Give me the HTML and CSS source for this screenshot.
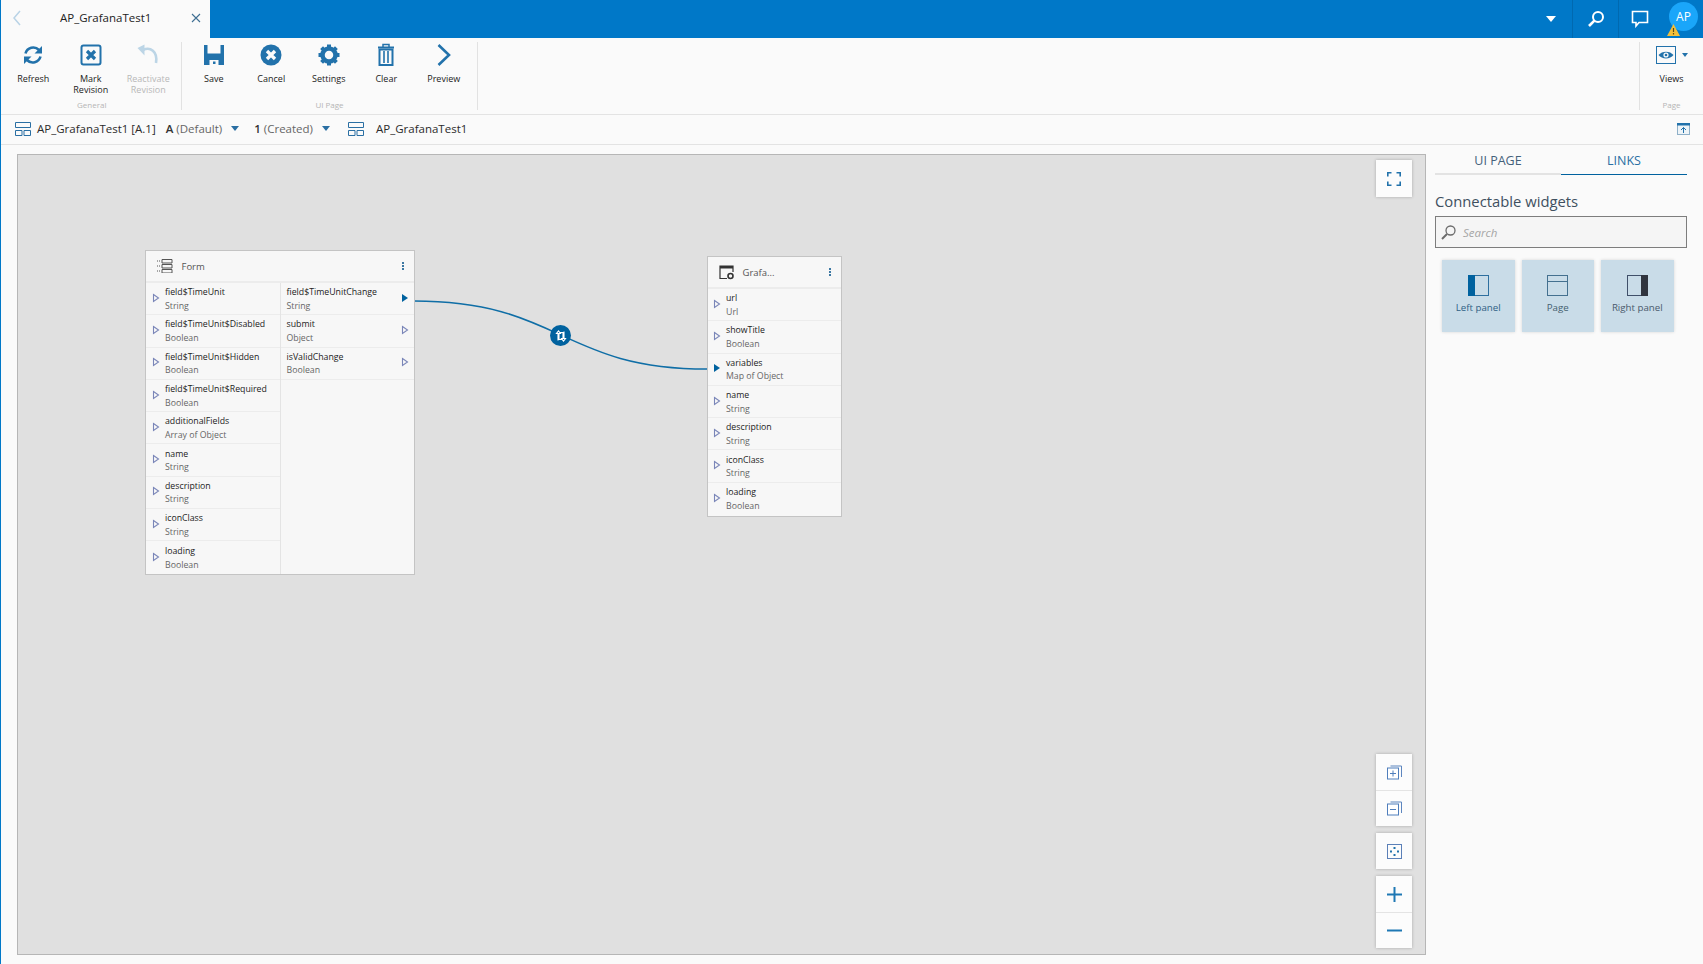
FILE: index.html
```html
<!DOCTYPE html>
<html lang="en">
<head>
<meta charset="utf-8">
<title>AP_GrafanaTest1</title>
<link rel="stylesheet" href="styles.css">
</head>
<body>
<svg class="defs" width="0" height="0" aria-hidden="true">
  <symbol id="port" viewBox="0 0 8 10"><path d="M1.5 1.5 L6.5 5 L1.5 8.5Z" fill="none" stroke="#7a86b8" stroke-width="1.1"/></symbol>
  <symbol id="port-on" viewBox="0 0 8 10"><path d="M1 1 L7 5 L1 9Z" fill="#00629f"/></symbol>
  <symbol id="layout" viewBox="0 0 16 14"><path d="M.5.5h15v5H.5zM.5 8.5h6.5v5H.5zM9 8.5h6.5v5H9z" fill="none" stroke="#2a6fa3" stroke-width="1"/></symbol>
</svg>

<header class="topbar">
  <div class="tab">
    <svg class="tab-back" width="10" height="16" viewBox="0 0 10 16"><path d="M8 1 L2 8 L8 15" fill="none" stroke="#b9d3e6" stroke-width="1.5"/></svg>
    <span class="tab-title">AP_GrafanaTest1</span>
    <svg class="tab-close" width="10" height="10" viewBox="0 0 10 10"><path d="M1 1L9 9M9 1L1 9" stroke="#3f6f93" stroke-width="1.1"/></svg>
  </div>
  <div class="top-actions">
    <div class="top-caret"></div>
    <div class="top-btn top-btn-search">
      <svg width="18" height="18" viewBox="0 0 18 18"><circle cx="11" cy="7" r="5" fill="none" stroke="#fff" stroke-width="2"/><path d="M7.4 10.6L2 16" stroke="#fff" stroke-width="2.6"/></svg>
    </div>
    <div class="top-btn top-btn-chat">
      <svg width="18" height="18" viewBox="0 0 18 18"><path d="M1.5 1.5h15v11H8l-3 3.5v-3.5H1.5z" fill="none" stroke="#fff" stroke-width="1.6"/></svg>
    </div>
    <div class="avatar">AP
      <svg class="avatar-warn" width="13" height="12" viewBox="0 0 13 12"><path d="M6.5 0L13 12H0z" fill="#f2bf3a"/><path d="M6.5 4v4M6.5 9v1.5" stroke="#5b4a14" stroke-width="1.2"/></svg>
    </div>
  </div>
</header>

<section class="ribbon">
  <div class="rgroup rgroup-general">
    <div class="ritems">
      <div class="ritem">
        <svg class="ricon" width="24" height="24" viewBox="0 0 24 24"><path d="M4.500 10.500A8 8 0 0 1 18 7" fill="none" stroke="#2272ab" stroke-width="2.600"/><path d="M21 3v7.500h-7.500z" fill="#2272ab"/><path d="M19.500 13.500A8 8 0 0 1 6 17" fill="none" stroke="#2272ab" stroke-width="2.600"/><path d="M3 21v-7.500h7.500z" fill="#2272ab"/></svg>
        <span class="rlabel">Refresh</span>
      </div>
      <div class="ritem">
        <svg class="ricon" width="24" height="24" viewBox="0 0 24 24"><rect x="2.500" y="2.500" width="19" height="19" rx="2" fill="none" stroke="#2272ab" stroke-width="2"/><path d="M8 8L16 16M16 8L8 16" stroke="#2272ab" stroke-width="3.200"/></svg>
        <span class="rlabel">Mark<br>Revision</span>
      </div>
      <div class="ritem ritem-off">
        <svg class="ricon" width="24" height="24" viewBox="0 0 24 24"><path d="M7 7C14 3.500 22 8 20 20" fill="none" stroke="#bcd5e6" stroke-width="2.600"/><path d="M8.500 1.500v11L1.500 5z" fill="#bcd5e6"/></svg>
        <span class="rlabel">Reactivate<br>Revision</span>
      </div>
    </div>
    <div class="rgroup-name">General</div>
  </div>
  <div class="rgroup rgroup-page">
    <div class="ritems">
      <div class="ritem">
        <svg class="ricon" width="24" height="24" viewBox="0 0 24 24"><path d="M2 2h20v20H2z" fill="#2272ab"/><path d="M5.500 2h13v8.500h-13z" fill="#fafafa"/><path d="M7.500 17h9v5h-9z" fill="#fafafa"/><path d="M11 18.500h2.500V21H11z" fill="#2272ab"/></svg>
        <span class="rlabel">Save</span>
      </div>
      <div class="ritem">
        <svg class="ricon" width="24" height="24" viewBox="0 0 24 24"><circle cx="12" cy="12" r="10.500" fill="#2272ab"/><path d="M8 8L16 16M16 8L8 16" stroke="#fafafa" stroke-width="3.400"/></svg>
        <span class="rlabel">Cancel</span>
      </div>
      <div class="ritem">
        <svg class="ricon" width="24" height="24" viewBox="0 0 24 24"><circle cx="12" cy="12" r="6.500" fill="none" stroke="#2272ab" stroke-width="4.500"/><path d="M12 1.500V6M12 18v4.500M1.500 12H6M18 12h4.500M4.600 4.600l3.200 3.200M16.200 16.200l3.200 3.200M19.400 4.600l-3.200 3.200M7.800 16.200l-3.200 3.200" stroke="#2272ab" stroke-width="4"/></svg>
        <span class="rlabel">Settings</span>
      </div>
      <div class="ritem">
        <svg class="ricon" width="24" height="24" viewBox="0 0 24 24"><path d="M4 4.500h16" stroke="#2272ab" stroke-width="2"/><path d="M9 4V1.500h6V4" fill="none" stroke="#2272ab" stroke-width="1.500"/><path d="M5.500 6.500v15.500h13V6.500z" fill="none" stroke="#2272ab" stroke-width="2"/><path d="M10 8v12M14 8v12" stroke="#2272ab" stroke-width="1.600"/></svg>
        <span class="rlabel">Clear</span>
      </div>
      <div class="ritem">
        <svg class="ricon" width="24" height="24" viewBox="0 0 24 24"><path d="M6.500 2L17 12 6.500 22" fill="none" stroke="#2272ab" stroke-width="2.600"/></svg>
        <span class="rlabel">Preview</span>
      </div>
    </div>
    <div class="rgroup-name">UI Page</div>
  </div>
  <div class="ribbon-gap"></div>
  <div class="rgroup rgroup-views">
    <div class="ritems">
      <div class="ritem ritem-views">
        <div class="views-icon">
          <svg class="ricon" width="20" height="18" viewBox="0 0 20 18"><rect x=".5" y=".5" width="19" height="17" fill="none" stroke="#2272ab"/><path d="M2.500 9C6 4.500 14 4.500 17.500 9 14 13.500 6 13.500 2.500 9z" fill="#2272ab"/><circle cx="10" cy="9" r="2.600" fill="#fafafa"/><circle cx="10" cy="9" r="1.300" fill="#2272ab"/></svg>
          <span class="views-caret"></span>
        </div>
        <span class="rlabel">Views</span>
      </div>
    </div>
    <div class="rgroup-name">Page</div>
  </div>
</section>

<nav class="crumbs">
  <svg class="crumb-icon" width="16" height="14"><use href="#layout"/></svg>
  <span class="crumb-name">AP_GrafanaTest1 [A.1]</span>
  <span class="crumb-sel"><b>A</b> <span class="muted">(Default)</span><i class="caret"></i></span>
  <span class="crumb-sel crumb-sel-2"><b>1</b> <span class="muted">(Created)</span><i class="caret"></i></span>
  <svg class="crumb-icon" width="16" height="14"><use href="#layout"/></svg>
  <span class="crumb-name crumb-last">AP_GrafanaTest1</span>
  <svg class="crumb-up" width="13" height="12" viewBox="0 0 13 12"><rect x=".5" y=".5" width="12" height="11" fill="#eef4f8" stroke="#8fb0c8"/><path d="M0 0h13v2.500H0z" fill="#2272ab"/><path d="M6.500 10V4.500M4 7l2.500-2.500L9 7" fill="none" stroke="#2272ab"/></svg>
</nav>

<main class="main">
  <section class="canvas">
    <svg class="wire" width="1407" height="799" viewBox="0 0 1407 799"><path d="M396 146 C 543 146, 543 214, 689 214" fill="none" stroke="#0f6ea6" stroke-width="1.500"/></svg>

    <article class="node node-form">
      <header class="node-head">
        <svg class="node-icon" width="16" height="14" viewBox="0 0 16 14"><path d="M5 .5h10v3.500H5zM5 5.500h10V9H5zM5 10.500h10V14H5z" fill="none" stroke="#555"/><path d="M0 2h3M0 7h3M0 12h3" stroke="#555" stroke-dasharray="1 1"/></svg>
        <span class="node-title">Form</span>
        <span class="node-menu"></span>
      </header>
      <div class="node-cols">
        <div class="col col-in">
          <div class="row"><svg class="port" width="8" height="10"><use href="#port"/></svg><div class="row-text"><div class="rn">field$TimeUnit</div><div class="rt">String</div></div></div>
          <div class="row"><svg class="port" width="8" height="10"><use href="#port"/></svg><div class="row-text"><div class="rn">field$TimeUnit$Disabled</div><div class="rt">Boolean</div></div></div>
          <div class="row"><svg class="port" width="8" height="10"><use href="#port"/></svg><div class="row-text"><div class="rn">field$TimeUnit$Hidden</div><div class="rt">Boolean</div></div></div>
          <div class="row"><svg class="port" width="8" height="10"><use href="#port"/></svg><div class="row-text"><div class="rn">field$TimeUnit$Required</div><div class="rt">Boolean</div></div></div>
          <div class="row"><svg class="port" width="8" height="10"><use href="#port"/></svg><div class="row-text"><div class="rn">additionalFields</div><div class="rt">Array of Object</div></div></div>
          <div class="row"><svg class="port" width="8" height="10"><use href="#port"/></svg><div class="row-text"><div class="rn">name</div><div class="rt">String</div></div></div>
          <div class="row"><svg class="port" width="8" height="10"><use href="#port"/></svg><div class="row-text"><div class="rn">description</div><div class="rt">String</div></div></div>
          <div class="row"><svg class="port" width="8" height="10"><use href="#port"/></svg><div class="row-text"><div class="rn">iconClass</div><div class="rt">String</div></div></div>
          <div class="row"><svg class="port" width="8" height="10"><use href="#port"/></svg><div class="row-text"><div class="rn">loading</div><div class="rt">Boolean</div></div></div>
        </div>
        <div class="col col-out">
          <div class="row row-out"><div class="row-text"><div class="rn">field$TimeUnitChange</div><div class="rt">String</div></div><svg class="port" width="8" height="10"><use href="#port-on"/></svg></div>
          <div class="row row-out"><div class="row-text"><div class="rn">submit</div><div class="rt">Object</div></div><svg class="port" width="8" height="10"><use href="#port"/></svg></div>
          <div class="row row-out"><div class="row-text"><div class="rn">isValidChange</div><div class="rt">Boolean</div></div><svg class="port" width="8" height="10"><use href="#port"/></svg></div>
        </div>
      </div>
    </article>

    <article class="node node-grafana">
      <header class="node-head">
        <svg class="node-icon" width="16" height="15" viewBox="0 0 16 15"><path d="M8 13.500H1V1h13v6" fill="none" stroke="#333" stroke-width="1.200"/><path d="M1 1h13v2.500H1z" fill="#333"/><circle cx="11.500" cy="11" r="2.500" fill="none" stroke="#333" stroke-width="1.600"/></svg>
        <span class="node-title">Grafa...</span>
        <span class="node-menu"></span>
      </header>
      <div class="col">
        <div class="row"><svg class="port" width="8" height="10"><use href="#port"/></svg><div class="row-text"><div class="rn">url</div><div class="rt">Url</div></div></div>
        <div class="row"><svg class="port" width="8" height="10"><use href="#port"/></svg><div class="row-text"><div class="rn">showTitle</div><div class="rt">Boolean</div></div></div>
        <div class="row"><svg class="port" width="8" height="10"><use href="#port-on"/></svg><div class="row-text"><div class="rn">variables</div><div class="rt">Map of Object</div></div></div>
        <div class="row"><svg class="port" width="8" height="10"><use href="#port"/></svg><div class="row-text"><div class="rn">name</div><div class="rt">String</div></div></div>
        <div class="row"><svg class="port" width="8" height="10"><use href="#port"/></svg><div class="row-text"><div class="rn">description</div><div class="rt">String</div></div></div>
        <div class="row"><svg class="port" width="8" height="10"><use href="#port"/></svg><div class="row-text"><div class="rn">iconClass</div><div class="rt">String</div></div></div>
        <div class="row"><svg class="port" width="8" height="10"><use href="#port"/></svg><div class="row-text"><div class="rn">loading</div><div class="rt">Boolean</div></div></div>
      </div>
    </article>

    <div class="wire-badge">
      <svg width="12" height="12" viewBox="0 0 12 12"><path d="M3 10.500V3.500H1.500L3.500 1 5.500 3.500H4V9.500H7M9 1.500V8.500H10.500L8.500 11 6.500 8.500H8V2.500H5" fill="none" stroke="#fff" stroke-width="1.100"/></svg>
    </div>

    <button class="tool tool-full" aria-label="Full screen">
      <svg width="14" height="14" viewBox="0 0 14 14"><path d="M.8 4.500V.8h3.700M9.500.8h3.700v3.700M13.200 9.500v3.700H9.500M4.500 13.200H.8V9.500" fill="none" stroke="#2272ab" stroke-width="1.600"/></svg>
    </button>

    <div class="tools">
      <div class="tool-stack">
        <button class="tool" aria-label="Expand all">
          <svg width="15" height="15" viewBox="0 0 15 15"><path d="M3.500 1h11v11" fill="none" stroke="#5d86bf"/><rect x=".5" y="3" width="11" height="11" fill="#fff" stroke="#4f7ebc"/><path d="M3 8.500h6M6 5.500v6" stroke="#4f7ebc"/></svg>
        </button>
        <button class="tool" aria-label="Collapse all">
          <svg width="15" height="15" viewBox="0 0 15 15"><path d="M3.500 1h11v11" fill="none" stroke="#5d86bf"/><rect x=".5" y="3" width="11" height="11" fill="#fff" stroke="#4f7ebc"/><path d="M3 8.500h6" stroke="#4f7ebc"/></svg>
        </button>
      </div>
      <div class="tool-stack">
        <button class="tool" aria-label="Fit">
          <svg width="15" height="15" viewBox="0 0 15 15"><rect x=".5" y=".5" width="14" height="14" fill="none" stroke="#5b80b8"/><path d="M6.500 3h2v2h-2zM6.500 10h2v2h-2zM3 6.500h2v2H3zM10 6.500h2v2h-2z" fill="#2272ab"/></svg>
        </button>
      </div>
      <div class="tool-stack">
        <button class="tool" aria-label="Zoom in">
          <svg width="15" height="15" viewBox="0 0 15 15"><path d="M0 7.500h15M7.500 0v15" stroke="#1f78b4" stroke-width="2"/></svg>
        </button>
        <button class="tool" aria-label="Zoom out">
          <svg width="15" height="15" viewBox="0 0 15 15"><path d="M0 7.500h15" stroke="#1f78b4" stroke-width="2"/></svg>
        </button>
      </div>
    </div>
  </section>

  <aside class="side">
    <div class="side-tabs">
      <div class="side-tab">UI PAGE</div>
      <div class="side-tab side-tab-on">LINKS</div>
    </div>
    <h2 class="side-title">Connectable widgets</h2>
    <div class="search">
      <svg width="15" height="15" viewBox="0 0 15 15"><circle cx="9.500" cy="5.500" r="4.500" fill="none" stroke="#6b6b6b" stroke-width="1.300"/><path d="M6 9L1 14" stroke="#6b6b6b" stroke-width="2"/></svg>
      <span class="search-text">Search</span>
    </div>
    <div class="tiles">
      <div class="tile">
        <svg width="21" height="21" viewBox="0 0 21 21"><rect x=".5" y=".5" width="20" height="20" fill="none" stroke="#2e6f9f"/><path d="M0 0h7v21H0z" fill="#00629f"/></svg>
        <span class="tile-label">Left panel</span>
      </div>
      <div class="tile">
        <svg width="21" height="21" viewBox="0 0 21 21"><rect x=".5" y=".5" width="20" height="20" fill="none" stroke="#44708f"/><path d="M0 6.500h21" stroke="#44708f"/></svg>
        <span class="tile-label">Page</span>
      </div>
      <div class="tile">
        <svg width="21" height="21" viewBox="0 0 21 21"><rect x=".5" y=".5" width="20" height="20" fill="none" stroke="#40506a"/><path d="M14 0h7v21h-7z" fill="#30353f"/></svg>
        <span class="tile-label">Right panel</span>
      </div>
    </div>
  </aside>
</main>
</body>
</html>
```

FILE: styles.css
```css
* { box-sizing: border-box; }
html, body { height: 100%; }
body {
  margin: 0;
  height: 964px;
  overflow: hidden;
  display: flex;
  flex-direction: column;
  background: #fafafa;
  border-left: 1px solid #0078c8;
  font-family: "Open Sans", "Liberation Sans", sans-serif;
  color: #222;
}
.defs { position: absolute; }

/* top bar */
.topbar {
  height: 38px;
  flex: none;
  display: flex;
  justify-content: space-between;
  background: #0078c8;
}
.tab {
  width: 209px;
  display: flex;
  align-items: center;
  background: #fafafa;
  padding: 0 9px 2px 11px;
}
.tab-title { margin-left: 38px; padding-bottom: 2px; font-size: 11.500px; color: #222; flex: 1; }
.top-actions { display: flex; align-items: center; height: 38px; }
.top-caret {
  width: 0; height: 0;
  margin-right: 16px;
  border-left: 5px solid transparent;
  border-right: 5px solid transparent;
  border-top: 6px solid #fff;
}
.top-btn {
  width: 46px; height: 38px;
  display: flex; align-items: center; justify-content: center;
  border-left: 1px solid #0069b0;
}
.top-btn-chat { width: 42px; margin-right: 9px; }
.avatar {
  position: relative;
  width: 29px; height: 29px;
  margin: 0 5px 6px 0;
  border-radius: 50%;
  background: #1aa6fa;
  color: #fff;
  font-size: 12px;
  line-height: 29px;
  text-align: center;
}
.avatar-warn { position: absolute; left: -2px; bottom: -5px; }

/* ribbon */
.ribbon {
  height: 77px;
  flex: none;
  display: flex;
  border-bottom: 1px solid #e3e3e3;
  padding: 4px 0 0 3.500px;
}
.rgroup {
  height: 68px;
  display: flex;
  flex-direction: column;
  border-right: 1px solid #e2e2e2;
}
.rgroup-general { width: 177.500px; }
.rgroup-page { width: 296px; padding-left: 3px; }
.ribbon-gap { flex: 1; }
.rgroup-views { width: 64px; border-right: 0; border-left: 1px solid #e2e2e2; }
.ritems { display: flex; flex: 1; }
.ritem {
  width: 57.5px;
  display: flex;
  flex-direction: column;
  align-items: center;
  padding-top: 1px;
}
.ricon { flex: none; }
.rlabel {
  margin-top: 6px;
  font-size: 9px;
  line-height: 11px;
  text-align: center;
  color: #222;
}
.ritem-off .rlabel { color: #b8b8b8; }
.ritem-views { width: 64px; }
.views-icon { height: 24px; display: flex; align-items: center; margin-left: 1px; }
.views-caret {
  width: 0; height: 0;
  margin-left: 6px;
  border-left: 3px solid transparent;
  border-right: 3px solid transparent;
  border-top: 4px solid #2272ab;
}
.rgroup-name {
  height: 14px;
  font-size: 8px;
  line-height: 12px;
  text-align: center;
  color: #b5b5b5;
  position: relative;
  top: 3px;
}
.rgroup-general .rgroup-name { padding-right: 2px; }
.rgroup-page .rgroup-name { padding-right: 3px; }

/* breadcrumb */
.crumbs {
  height: 30px;
  flex: none;
  display: flex;
  align-items: center;
  padding: 0 13px 2px 14px;
  border-bottom: 1px solid #e3e3e3;
  font-size: 11.500px;
}
.crumb-icon { flex: none; }
.crumb-name { margin-left: 6px; color: #2b2b2b; }
.crumb-last { margin-left: 12px; }
.crumb-sel { margin-left: 10px; display: flex; align-items: center; gap: 3px; }
.crumb-sel b { font-weight: 600; color: #333; }
.crumb-sel-2 { margin-left: 15px; margin-right: 18px; }
.muted { color: #666; }
.caret {
  width: 0; height: 0;
  margin-left: 6px;
  border-left: 4.500px solid transparent;
  border-right: 4.500px solid transparent;
  border-top: 5px solid #2a6fa3;
}
.crumb-up { margin-left: auto; }

/* main */
.main { flex: 1; min-height: 0; display: flex; padding: 9px 16px 9px 16px; }
.canvas {
  position: relative;
  width: 1409px;
  height: 801px;
  flex: none;
  background: #e0e0e0;
  border: 1px solid #b6b6b6;
}
.wire { position: absolute; left: 0; top: 0; }
.wire-badge {
  position: absolute;
  left: 532px; top: 170px;
  width: 21px; height: 21px;
  border-radius: 50%;
  background: #00629f;
  display: flex; align-items: center; justify-content: center;
}

/* nodes */
.node {
  position: absolute;
  background: #f7f7f7;
  border: 1.500px solid #c4c4c4;
}
.node-form { left: 126.500px; top: 95px; width: 270.500px; height: 325px; }
.node-grafana { left: 688.500px; top: 101px; width: 135px; height: 261px; }
.node-head {
  height: 32px;
  display: flex;
  align-items: center;
  padding: 0 10px 0 11px;
  border-bottom: 2px solid #ececec;
}
.node-icon { flex: none; }
.node-title { margin-left: 9px; flex: 1; font-size: 9.500px; color: #555; }
.node-grafana .node-title { margin-left: 8px; }
.node-menu {
  width: 2px; height: 2px;
  background: #3d78a3;
  box-shadow: 0 -3px 0 #3d78a3, 0 3px 0 #3d78a3;
}
.node-cols { display: flex; height: calc(100% - 32px); }
.col-in { width: 135px; flex: none; border-right: 1.500px solid #e4e4e4; }
.col-out { flex: 1; }
.row {
  height: 32.300px;
  display: flex;
  align-items: center;
  gap: 5px;
  padding-left: 6.500px;
  border-bottom: 1.500px solid #ececec;
}
.node-grafana .row { padding-left: 5.500px; }
.col > .row:last-child { border-bottom: 0; }
.col-out > .row:last-child { border-bottom: 1.500px solid #ececec; }
.row-out { justify-content: space-between; padding: 0 5px 0 6px; }
.port { flex: none; margin-bottom: 2px; }
.row-text { margin-top: 2px; }
.rn { font-size: 8.750px; line-height: 13.500px; color: #222; white-space: nowrap; }
.rt { font-size: 8.750px; line-height: 13.500px; color: #666; white-space: nowrap; }

/* canvas tools */
.tool {
  display: flex; align-items: center; justify-content: center;
  width: 36px; height: 36px;
  padding: 0;
  border: 0;
  background: #fcfcfc;
}
.tool + .tool { border-top: 1px solid #e4e4e4; }
.tool-full {
  position: absolute;
  left: 1358px; top: 5px;
  height: 37px;
  box-shadow: 0 0 3px rgba(0,0,0,.25);
}
.tools {
  position: absolute;
  left: 1358px; bottom: 6px;
  display: flex;
  flex-direction: column;
  gap: 7px;
}
.tool-stack { display: flex; flex-direction: column; box-shadow: 0 0 3px rgba(0,0,0,.25); }

/* side panel */
.side { flex: 1; margin-left: 9px; min-width: 0; }
.side-tabs { display: flex; height: 21px; }
.side-tab {
  flex: 1;
  font-size: 12.500px;
  line-height: 13px;
  text-align: center;
  color: #44617a;
  border-bottom: 2px solid #e3e3e3;
}
.side-tab-on { color: #2a6fa3; border-bottom: 1.500px solid #00629f; }
.side-title {
  margin: 16px 0 0;
  font-size: 14.800px;
  line-height: 20px;
  font-weight: 400;
  color: #40505f;
}
.search {
  height: 32px;
  margin-top: 5px;
  display: flex;
  align-items: center;
  gap: 7px;
  padding-left: 5px;
  border: 1px solid #7d7d7d;
  background: #f5f5f5;
}
.search-text { font-size: 11.500px; font-style: italic; color: #a5a5a5; }
.tiles { display: flex; gap: 7px; margin: 12px 0 0 7px; }
.tile {
  width: 72.5px; height: 72px;
  display: flex;
  flex-direction: column;
  align-items: center;
  padding-top: 15px;
  background: #c9dce8;
  box-shadow: 0 0 3px rgba(0,0,0,.15);
}
.tile-label { margin-top: 5px; font-size: 9.700px; line-height: 14px; color: #2f5f85; }
.tile:nth-child(2) .tile-label { color: #44606f; }
.tile:nth-child(3) .tile-label { color: #4a5a6c; }
```
